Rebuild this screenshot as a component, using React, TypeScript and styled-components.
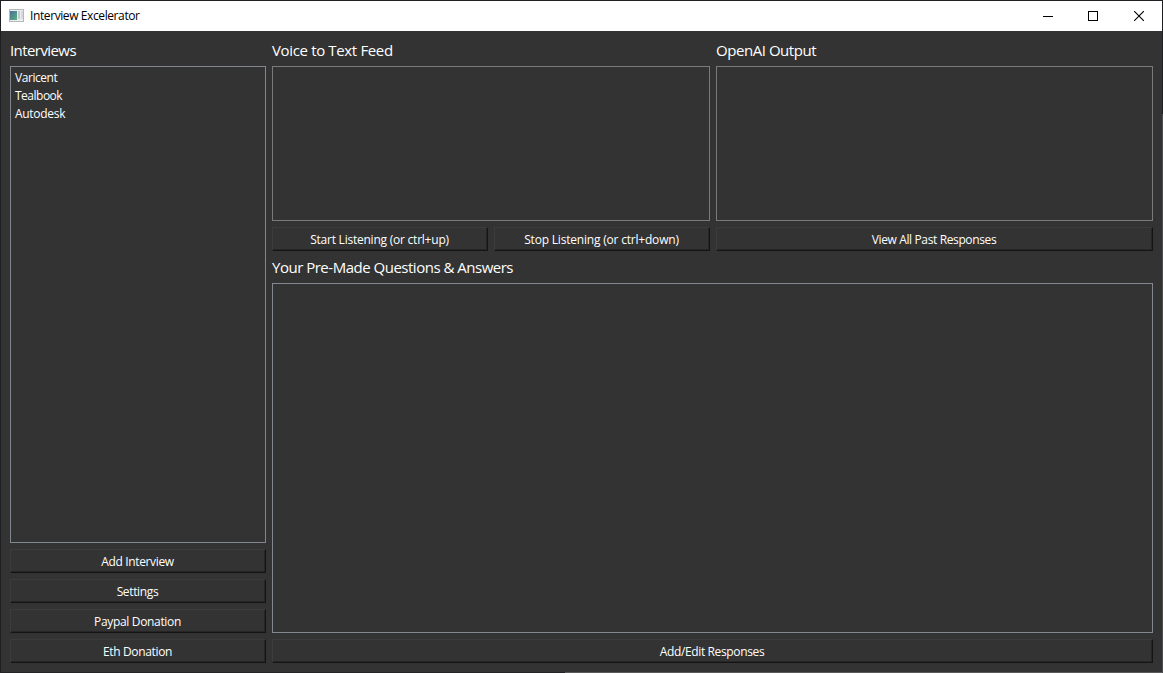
import React from "react";
import styled, { createGlobalStyle } from "styled-components";

const GlobalStyle = createGlobalStyle`
  *, *::before, *::after { box-sizing: border-box; }
  html, body { margin: 0; padding: 0; background: #202020; overflow: hidden; }
  body { font-family: "Open Sans", "Noto Sans", sans-serif; font-size: 12px; }
`;

const Window = styled.div`
  width: 1163px;
  height: 673px;
  display: flex;
  flex-direction: column;
  border: 1px solid transparent;
  background:
    linear-gradient(#333333, #333333) padding-box,
    linear-gradient(to right, transparent 1162px, #1f1f21 1162px) 0 0 / 100% 114px no-repeat border-box,
    linear-gradient(to right, transparent 1162px, #4c4c4e 1162px) border-box,
    linear-gradient(to right, #232326 565px, #5a5a5a 565px) 0 100% / 100% 1px no-repeat border-box,
    #202024 border-box;
`;

const TitleBar = styled.header`
  flex: none;
  height: 30px;
  display: flex;
  align-items: center;
  padding-left: 8px;
  background: #ffffff;
  color: #000000;
`;

const AppIcon = styled.svg`
  width: 15px;
  height: 13px;
  margin: 0 6px 2px 0;
`;

const Title = styled.h1<{ $track: number }>`
  flex: 1;
  margin: 0;
  font-size: 12px;
  font-weight: 400;
  line-height: 16px;
  letter-spacing: ${(p) => p.$track}px;
`;

const Controls = styled.div`
  display: flex;
`;

const WindowControl = styled.button<{ $width?: number }>`
  width: ${(p) => p.$width ?? 46}px;
  height: 30px;
  padding: 0;
  display: flex;
  align-items: center;
  justify-content: center;
  border: 0;
  background: transparent;
`;

const Body = styled.main`
  flex: 1;
  min-height: 0;
  display: grid;
  grid-template-columns: 256px 1fr;
  column-gap: 6px;
  padding: 9px;
`;

const Sidebar = styled.aside`
  display: flex;
  flex-direction: column;
  gap: 6px;
  min-height: 0;
`;

const MainArea = styled.section`
  display: grid;
  grid-template-columns: 438px 437px;
  grid-template-rows: 211px 20px 350px 24px;
  gap: 6px;
`;

const Feed = styled.div`
  display: flex;
  flex-direction: column;
  gap: 6px;
`;

const Heading = styled.h2<{ $track: number; $wide?: boolean }>`
  margin: 0;
  height: 20px;
  flex: none;
  font-size: 15px;
  font-weight: 400;
  line-height: 20px;
  color: #ffffff;
  white-space: nowrap;
  letter-spacing: ${(p) => p.$track}px;
  grid-column: ${(p) => (p.$wide ? "1 / -1" : "auto")};
`;

const Panel = styled.div<{ $bluish?: boolean; $wide?: boolean }>`
  flex: 1;
  min-height: 0;
  border: 1px solid ${(p) => (p.$bluish ? "#828790" : "#7a7a7a")};
  background: #333333;
  grid-column: ${(p) => (p.$wide ? "1 / -1" : "auto")};
`;

const InterviewList = styled.ul`
  margin: 0;
  padding: 2px 4px;
  list-style: none;
`;

const Interview = styled.li<{ $track: number }>`
  height: 18px;
  line-height: 18px;
  color: #ffffff;
  letter-spacing: ${(p) => p.$track}px;
`;

const ButtonRow = styled.div`
  display: grid;
  grid-template-columns: 1fr 1fr;
  column-gap: 6px;
`;

const PushButton = styled.button<{ $track: number; $wide?: boolean }>`
  flex: none;
  height: 24px;
  padding: 1px 1px 0 0;
  border: 1px solid #3c3c3c;
  border-right-color: #141414;
  border-bottom-color: #141414;
  box-shadow: inset -1px -1px 0 #262626;
  background: #333333;
  color: #ffffff;
  font-family: inherit;
  font-size: 12px;
  line-height: 20px;
  letter-spacing: ${(p) => p.$track}px;
  grid-column: ${(p) => (p.$wide ? "1 / -1" : "auto")};
`;

const interviews = [
  { name: "Varicent", track: -0.45 },
  { name: "Tealbook", track: -0.5 },
  { name: "Autodesk", track: -0.3 },
];

const actions = [
  { label: "Add Interview", track: -0.35 },
  { label: "Settings", track: -0.35 },
  { label: "Paypal Donation", track: -0.33 },
  { label: "Eth Donation", track: -0.35 },
];

export default function App() {
  return (
    <>
      <GlobalStyle />
      <Window>
        <TitleBar>
          <AppIcon viewBox="0 0 15 13" shapeRendering="crispEdges">
            <defs>
              <linearGradient id="screen" x1="0" y1="0" x2="1" y2="1">
                <stop offset="0" stopColor="#4a6f9c" />
                <stop offset="1" stopColor="#5bb07c" />
              </linearGradient>
            </defs>
            <rect x="0" y="0" width="15" height="13" fill="#b4b8bb" />
            <rect x="1" y="1" width="13" height="11" fill="#eceeef" />
            <rect x="1" y="2" width="7" height="9" fill="url(#screen)" />
            <rect x="9" y="2" width="2" height="8" fill="#c3cbd0" />
            <rect x="12" y="2" width="2" height="8" fill="#d3d9dc" />
          </AppIcon>
          <Title $track={-0.4}>Interview Excelerator</Title>
          <Controls>
            <WindowControl aria-label="Minimize" $width={44}>
              <svg width="10" height="10" shapeRendering="crispEdges">
                <rect x="0" y="5" width="10" height="1" fill="#000" />
              </svg>
            </WindowControl>
            <WindowControl aria-label="Maximize">
              <svg width="10" height="10" shapeRendering="crispEdges">
                <rect x="0.5" y="0.5" width="9" height="9" fill="none" stroke="#000" />
              </svg>
            </WindowControl>
            <WindowControl aria-label="Close">
              <svg width="10" height="10">
                <path d="M0 0L10 10M10 0L0 10" stroke="#000" strokeWidth="1.1" />
              </svg>
            </WindowControl>
          </Controls>
        </TitleBar>
        <Body>
          <Sidebar>
            <Heading $track={-0.58}>Interviews</Heading>
            <Panel $bluish>
              <InterviewList>
                {interviews.map((i) => (
                  <Interview key={i.name} $track={i.track}>{i.name}</Interview>
                ))}
              </InterviewList>
            </Panel>
            {actions.map((a) => (
              <PushButton key={a.label} $track={a.track}>{a.label}</PushButton>
            ))}
          </Sidebar>
          <MainArea>
            <Feed>
              <Heading $track={-0.35}>Voice to Text Feed</Heading>
              <Panel />
              <ButtonRow>
                <PushButton $track={-0.23}>Start Listening (or ctrl+up)</PushButton>
                <PushButton $track={-0.2}>Stop Listening (or ctrl+down)</PushButton>
              </ButtonRow>
            </Feed>
            <Feed>
              <Heading $track={-0.45}>OpenAI Output</Heading>
              <Panel />
              <PushButton $track={-0.37}>View All Past Responses</PushButton>
            </Feed>
            <Heading $wide $track={-0.49}>Your Pre-Made Questions &amp; Answers</Heading>
            <Panel $wide $bluish />
            <PushButton $wide $track={-0.36}>Add/Edit Responses</PushButton>
          </MainArea>
        </Body>
      </Window>
    </>
  );
}
